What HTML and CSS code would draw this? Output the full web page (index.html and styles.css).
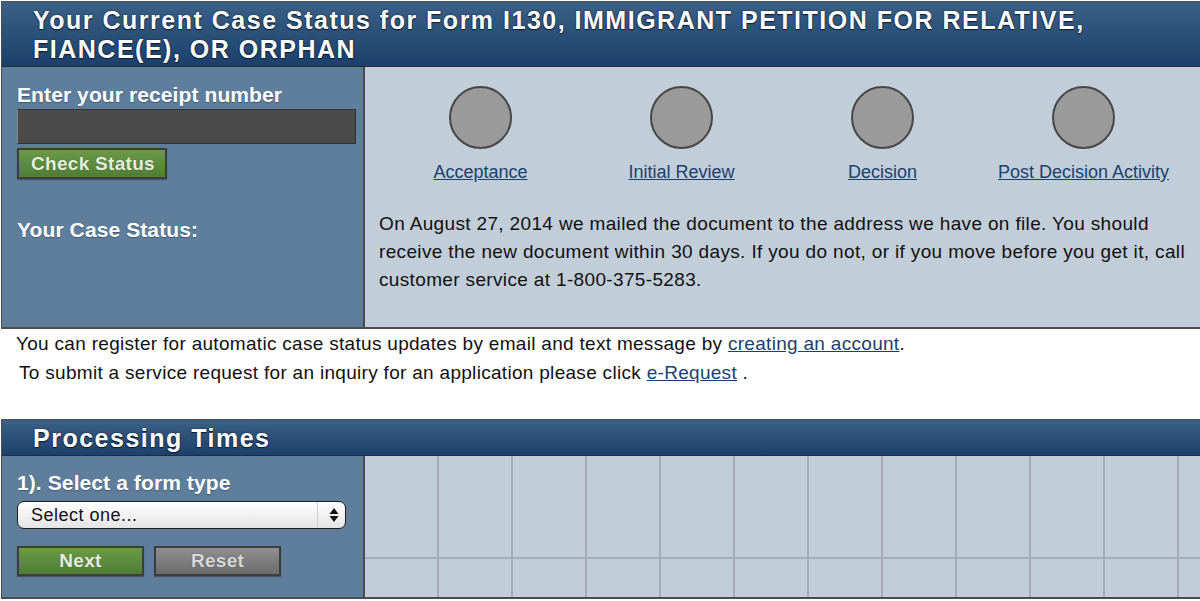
FILE: index.html
```html
<!DOCTYPE html>
<html lang="en">
<head>
    <meta charset="UTF-8">
    <meta name="viewport" content="width=device-width, initial-scale=1.0">
    <title>Case Status</title>
    <link rel="stylesheet" href="styles.css">
</head>
<body>
    <!-- Estado del caso -->
    <div class="box">
        <div class="box-header">
            <h1>Your Current Case Status for Form I130, IMMIGRANT PETITION FOR RELATIVE,<br>FIANCE(E), OR ORPHAN</h1>
        </div>
        <div class="box-row case-row">
            <div class="side">
                <label class="side-label" for="receipt">Enter your receipt number</label>
                <input class="receipt" id="receipt" type="text">
                <button class="btn btn-green check">Check Status</button>
                <div class="side-label status-label">Your Case Status:</div>
            </div>
            <div class="main">
                <div class="steps">
                    <div class="step">
                        <div class="dot"></div>
                        <a href="#">Acceptance</a>
                    </div>
                    <div class="step">
                        <div class="dot"></div>
                        <a href="#">Initial Review</a>
                    </div>
                    <div class="step">
                        <div class="dot"></div>
                        <a href="#">Decision</a>
                    </div>
                    <div class="step">
                        <div class="dot"></div>
                        <a href="#">Post Decision Activity</a>
                    </div>
                </div>
                <p class="status-text">On August 27, 2014 we mailed the document to the address we have on file. You should receive the new document within 30 days. If you do not, or if you move before you get it, call customer service at 1-800-375-5283.</p>
            </div>
        </div>
    </div>

    <div class="notes">
        <p>You can register for automatic case status updates by email and text message by <a href="#">creating an account</a>.</p>
        <p class="indent">To submit a service request for an inquiry for an application please click <a href="#">e-Request</a> .</p>
    </div>

    <!-- Tiempos de proceso -->
    <div class="box times">
        <div class="box-header small">
            <h2>Processing Times</h2>
        </div>
        <div class="box-row times-row">
            <div class="side">
                <label class="side-label" for="formType">1). Select a form type</label>
                <div class="select-wrap">
                    <select id="formType" class="select">
                        <option>Select one...</option>
                    </select>
                    <svg class="arrows" width="12" height="16" viewBox="0 0 12 16">
                        <path d="M6 1 L10.5 7 L1.5 7 Z" fill="#111"/>
                        <path d="M6 15 L10.5 9 L1.5 9 Z" fill="#111"/>
                    </svg>
                </div>
                <div class="buttons">
                    <button class="btn btn-green wide">Next</button>
                    <button class="btn btn-gray wide">Reset</button>
                </div>
            </div>
            <div class="main grid">
                <div></div><div></div><div></div><div></div><div></div><div></div><div></div><div></div><div></div><div></div><div></div><div></div>
                <div></div><div></div><div></div><div></div><div></div><div></div><div></div><div></div><div></div><div></div><div></div><div></div>
            </div>
        </div>
    </div>
</body>
</html>
```

FILE: styles.css
```css
* {
    margin: 0;
    padding: 0;
    box-sizing: border-box;
}

body {
    font-family: "Liberation Sans", Arial, sans-serif;
    background-color: #fff;
    color: #111;
    width: 1200px;
    height: 601px;
    overflow: hidden;
}

a {
    color: #1b3f6e;
    text-decoration: underline;
}

/* Cajas */
.box {
    width: 1240px;
    margin: 1px 0 0 1px;
    border: 1px solid #4d4d4d;
    border-right: none;
    border-bottom: 2px solid #4d4d4d;
}

.box-header {
    height: 65px;
    padding: 4px 0 0 31px;
    background: linear-gradient(#3c6187, #1c406b);
    border-bottom: 1px solid #2b2b2b;
}

.box-header h1,
.box-header h2 {
    color: #fff;
    font-size: 25px;
    line-height: 29px;
    letter-spacing: 1.5px;
    font-weight: bold;
    text-shadow: 0 1px 1px #0d1c30, 0 0 2px #0d1c30;
}

.box-header.small {
    height: 36px;
    padding-top: 2px;
}

.box-header.small h2 {
    line-height: 33px;
}

.box-row {
    display: flex;
}

.side {
    width: 363px;
    flex-shrink: 0;
    background-color: #5f7e9c;
    border-right: 2px solid #4a4a4a;
    padding: 16px 0 0 15px;
    display: flex;
    flex-direction: column;
    align-items: flex-start;
}

.main {
    flex: 1;
    background-color: #c1cdd8;
}

.side-label {
    display: block;
    color: #fff;
    font-size: 21px;
    font-weight: bold;
    line-height: 24px;
    letter-spacing: 0.1px;
    text-shadow: 0 1px 1px #3f5a73;
}

/* Estado del caso */
.case-row {
    height: 260px;
}

.receipt {
    width: 339px;
    height: 35px;
    margin-top: 2px;
    background-color: #4a4a4a;
    border: 1px solid #333;
    border-left-color: #888;
}

.btn {
    font-family: "Liberation Sans", Arial, sans-serif;
    font-size: 19px;
    font-weight: bold;
    letter-spacing: 0.3px;
    color: #e6eede;
    border: 2px solid #3d3d3d;
    text-shadow: 0 0 1px rgba(0, 0, 0, 0.4);
    box-shadow: 0 1px 1px rgba(0, 0, 0, 0.3);
    cursor: pointer;
}

.btn-green {
    background: linear-gradient(#6c9a4a, #4f7d34);
}

.btn-gray {
    background: linear-gradient(#8e8e8e, #6c6c6c);
    color: #d8d8d8;
}

.check {
    width: 150px;
    height: 31px;
    margin-top: 4px;
    padding-left: 2px;
}

.status-label {
    margin-top: 39px;
}

.steps {
    display: flex;
    padding: 19px 0 0 15px;
}

.step {
    width: 201px;
    display: flex;
    flex-direction: column;
    align-items: center;
}

.dot {
    width: 63px;
    height: 63px;
    border-radius: 50%;
    background-color: #9a9a9a;
    border: 2px solid #474747;
}

.step a {
    margin-top: 12px;
    font-size: 18px;
    line-height: 22px;
    white-space: nowrap;
}

.status-text {
    width: 815px;
    margin: 27px 0 0 14px;
    font-size: 19px;
    line-height: 28px;
    letter-spacing: 0.35px;
    color: #111;
}

/* Notas */
.notes {
    padding-left: 16px;
    font-size: 19px;
    line-height: 29px;
    letter-spacing: 0.3px;
}

.notes .indent {
    padding-left: 3px;
}

/* Tiempos de proceso */
.times {
    margin-top: 32px;
}

.times-row {
    height: 141px;
}

.times .side {
    padding-top: 15px;
}

.select-wrap {
    position: relative;
    margin-top: 6px;
}

.select {
    appearance: none;
    -webkit-appearance: none;
    width: 329px;
    height: 28px;
    padding-left: 13px;
    font-family: "Liberation Sans", Arial, sans-serif;
    font-size: 18px;
    letter-spacing: 0.5px;
    color: #111;
    border: 1px solid #1e1e1e;
    border-radius: 7px;
    background: linear-gradient(#ffffff, #e4e4e4);
}

.arrows {
    position: absolute;
    right: 6px;
    top: 6px;
}

.select-wrap::after {
    content: "";
    position: absolute;
    right: 28px;
    top: 1px;
    bottom: 1px;
    width: 1px;
    background-color: #cfcfcf;
}

.buttons {
    display: flex;
    gap: 10px;
    margin-top: 17px;
}

.wide {
    width: 127px;
    height: 30px;
}

.grid {
    display: grid;
    grid-template-columns: repeat(12, 74px);
    grid-template-rows: 103px 1fr;
}

.grid div {
    border-right: 2px solid #a5aeb8;
}

.grid div:nth-child(-n+12) {
    border-bottom: 2px solid #a5aeb8;
}
```
